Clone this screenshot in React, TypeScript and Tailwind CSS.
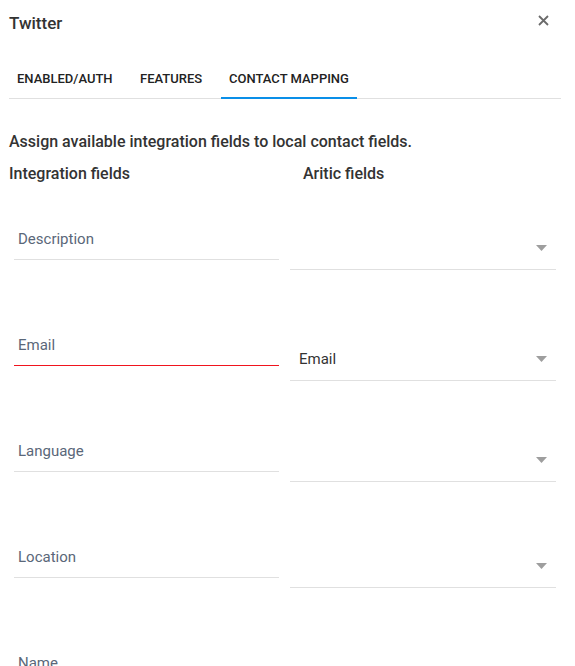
import React from "react";

type Row = { label: string; value?: string; active?: boolean };

const rows: Row[] = [
  { label: "Description" },
  { label: "Email", value: "Email", active: true },
  { label: "Language" },
  { label: "Location" },
  { label: "Name" },
];

function Arrow() {
  return (
    <svg width="11" height="6" viewBox="0 0 11 6" className="shrink-0">
      <path d="M0 0 L11 0 L5.5 6 Z" fill="#9e9e9e" />
    </svg>
  );
}

function FieldRow({ row }: { row: Row }) {
  return (
    <div className="flex h-[106px] shrink-0">
      <div className="ml-[14px] w-[265px]">
        <div className="pt-[15px] pb-[10px] pl-[4px]">
          <div className="h-[20px] leading-[20px] text-[15px] text-[#5a6779]">{row.label}</div>
        </div>
        {row.active ? (
          <div className="h-[1px] bg-[#f0141e]" />
        ) : (
          <div className="h-[1px] bg-[#e0e0e0]" />
        )}
      </div>
      <div className="ml-[11px] w-[266px]">
        <div
          className={`${row.value ? "pt-[29px]" : "pt-[24px]"} pb-[11px] pl-[9px] pr-[9px] flex items-center justify-between`}
        >
          <div className="h-[20px] leading-[20px] text-[15px] text-[#333]">{row.value ?? ""}</div>
          <Arrow />
        </div>
        <div className="h-[1px] bg-[#e0e0e0]" />
      </div>
    </div>
  );
}

export default function App() {
  return (
    <div
      className="w-[575px] h-[666px] overflow-hidden bg-white"
      style={{ fontFamily: "Roboto, 'Liberation Sans', sans-serif" }}
    >
      <div className="flex items-center justify-between pl-[9px] pr-[26px] pt-[12px] h-[34px]">
        <div className="text-[17px] font-medium text-[#333] leading-[22px]">Twitter</div>
        <svg width="11" height="11" viewBox="0 0 11 11" className="mt-[-5px]">
          <path d="M1 1 L10 10 M10 1 L1 10" stroke="#6b6b6b" strokeWidth="1.8" />
        </svg>
      </div>
      <div className="ml-[9px] mr-[14px] mt-[26px] flex border-b border-[#e0e0e0] h-[39px]">
        <div className="w-[111px] pl-[8px] h-full flex items-center text-[13px] font-medium text-[#222] whitespace-nowrap">
          ENABLED/AUTH
        </div>
        <div className="ml-[12px] w-[89px] pl-[8px] h-full flex items-center text-[13px] font-medium text-[#222] whitespace-nowrap">
          FEATURES
        </div>
        <div className="w-[136px] pl-[8px] h-full flex items-center text-[13px] font-medium text-[#222] whitespace-nowrap relative">
          CONTACT MAPPING
          <div className="absolute left-0 right-0 bottom-[-1px] h-[2px] bg-[#0a8fe8]" />
        </div>
      </div>
      <div className="pl-[9px] mt-[33px] text-[16px] font-medium text-[#333] leading-[20px]">
        Assign available integration fields to local contact fields.
      </div>
      <div className="flex pl-[9px] mt-[12px] text-[16px] font-medium text-[#333] leading-[20px]">
        <div className="w-[294px]">Integration fields</div>
        <div>Aritic fields</div>
      </div>
      <div className="mt-[30px]">
        {rows.map((r) => (
          <FieldRow key={r.label} row={r} />
        ))}
      </div>
    </div>
  );
}
